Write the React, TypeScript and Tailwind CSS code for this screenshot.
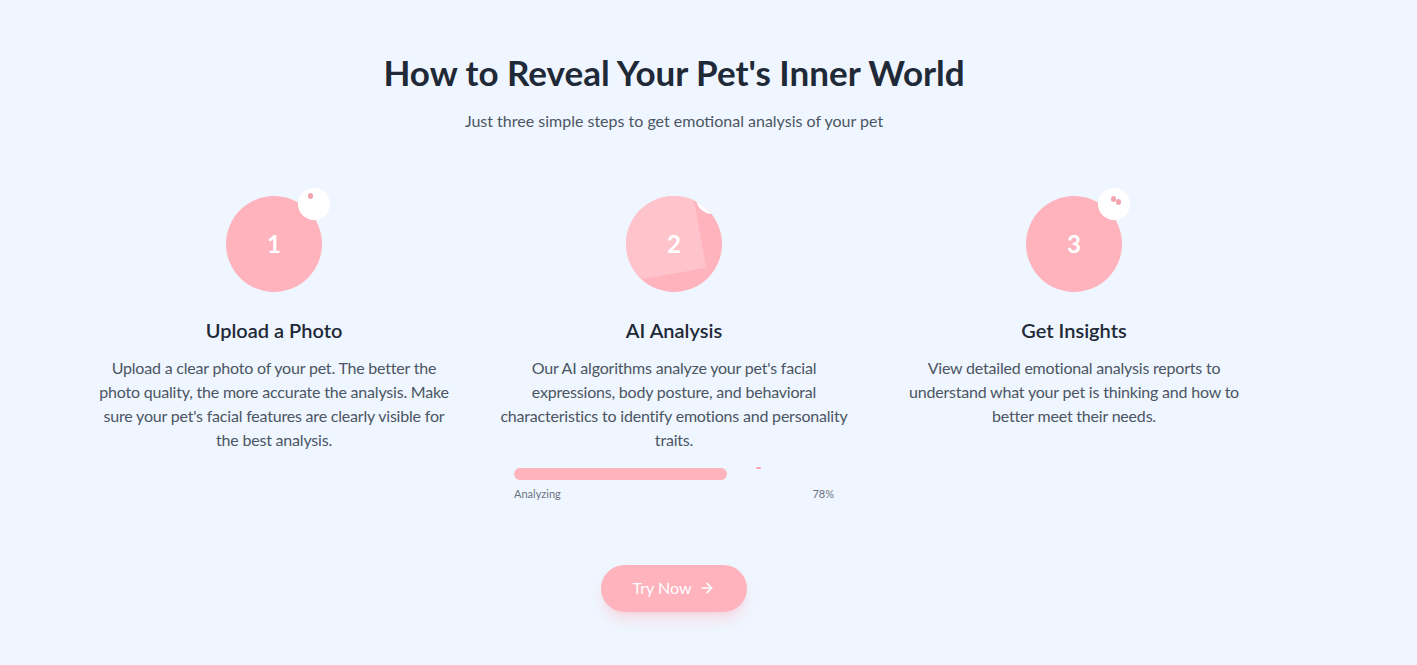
import { ArrowRight } from "lucide-react";

type Step = {
  num: string;
  title: string;
  desc: string;
};

const steps: Step[] = [
  {
    num: "1",
    title: "Upload a Photo",
    desc: "Upload a clear photo of your pet. The better the photo quality, the more accurate the analysis. Make sure your pet's facial features are clearly visible for the best analysis.",
  },
  {
    num: "2",
    title: "AI Analysis",
    desc: "Our AI algorithms analyze your pet's facial expressions, body posture, and behavioral characteristics to identify emotions and personality traits.",
  },
  {
    num: "3",
    title: "Get Insights",
    desc: "View detailed emotional analysis reports to understand what your pet is thinking and how to better meet their needs.",
  },
];

function StepBadge({ index, num }: { index: number; num: string }) {
  if (index === 1) {
    return (
      <div className="relative w-24 h-24 rounded-full bg-[#ffb3bd] overflow-hidden flex items-center justify-center">
        <div className="absolute left-[-14px] top-[-20px] w-[86px] h-[100px] bg-[#ffc4cb] rotate-[-10deg]" />
        <div className="absolute right-[-6px] top-[-14px] w-8 h-8 rounded-full bg-white" />
        <span className="relative text-2xl font-bold text-white">{num}</span>
      </div>
    );
  }
  return (
    <div className="relative w-24 h-24 rounded-full bg-[#ffb3bd] flex items-center justify-center">
      <span className="text-2xl font-bold text-white">{num}</span>
      <div className="absolute right-[-8px] top-[-8px] w-8 h-8 rounded-full bg-white">
        {index === 0 ? (
          <div className="absolute left-[10px] top-[5px] w-[5px] h-[6px] rounded-full bg-[#f4a5b0]" />
        ) : (
          <>
            <div className="absolute left-[13px] top-[8px] w-[5px] h-[6px] rounded-full bg-[#f4a5b0]" />
            <div className="absolute left-[18px] top-[11px] w-[5px] h-[6px] rounded-full bg-[#f4a5b0]" />
          </>
        )}
      </div>
    </div>
  );
}

export default function App() {
  return (
    <div
      className="min-h-[665px] bg-[#eff6ff] pt-[52px] pb-12"
      style={{ fontFamily: "Lato, 'Open Sans', sans-serif" }}
    >
      <div className="w-[1168px] ml-[90px]">
        <div className="text-center">
          <h2 className="text-[35px] leading-10 font-bold text-[#1f2937]">
            How to Reveal Your Pet's Inner World
          </h2>
          <p className="mt-[17px] text-base text-[#4b5563]">
            Just three simple steps to get emotional analysis of your pet
          </p>
        </div>

        <div className="grid grid-cols-3 gap-8 mt-[63px]">
          {steps.map((step, i) => (
            <div key={step.num} className="flex flex-col items-center text-center">
              <StepBadge index={i} num={step.num} />
              <h3 className="mt-6 text-xl font-semibold text-[#1f2937]">{step.title}</h3>
              <p className="mt-[12px] w-[356px] text-base leading-6 tracking-[-0.2px] text-[#4b5563]">
                {step.desc}
              </p>
              {i === 1 && (
                <div className="mt-4 w-[320px]">
                  <div className="relative h-3">
                    <div className="h-3 w-[213px] rounded-full bg-[#ffb3bd]" />
                    <div className="absolute left-[242px] top-[-1px] w-[5px] h-[2px] rounded-full bg-[#f4a5b0]" />
                  </div>
                  <div className="mt-[6px] flex justify-between text-[11px] text-[#6b7280]">
                    <span>Analyzing</span>
                    <span>78%</span>
                  </div>
                </div>
              )}
            </div>
          ))}
        </div>

        <div className="mt-[62px] flex justify-center">
          <button className="h-[47px] px-8 rounded-full bg-[#ffb3bd] text-white text-base flex items-center gap-2 shadow-lg shadow-[#ffb3bd]/40">
            Try Now
            <ArrowRight className="w-4 h-4" strokeWidth={2.5} />
          </button>
        </div>
      </div>
    </div>
  );
}
